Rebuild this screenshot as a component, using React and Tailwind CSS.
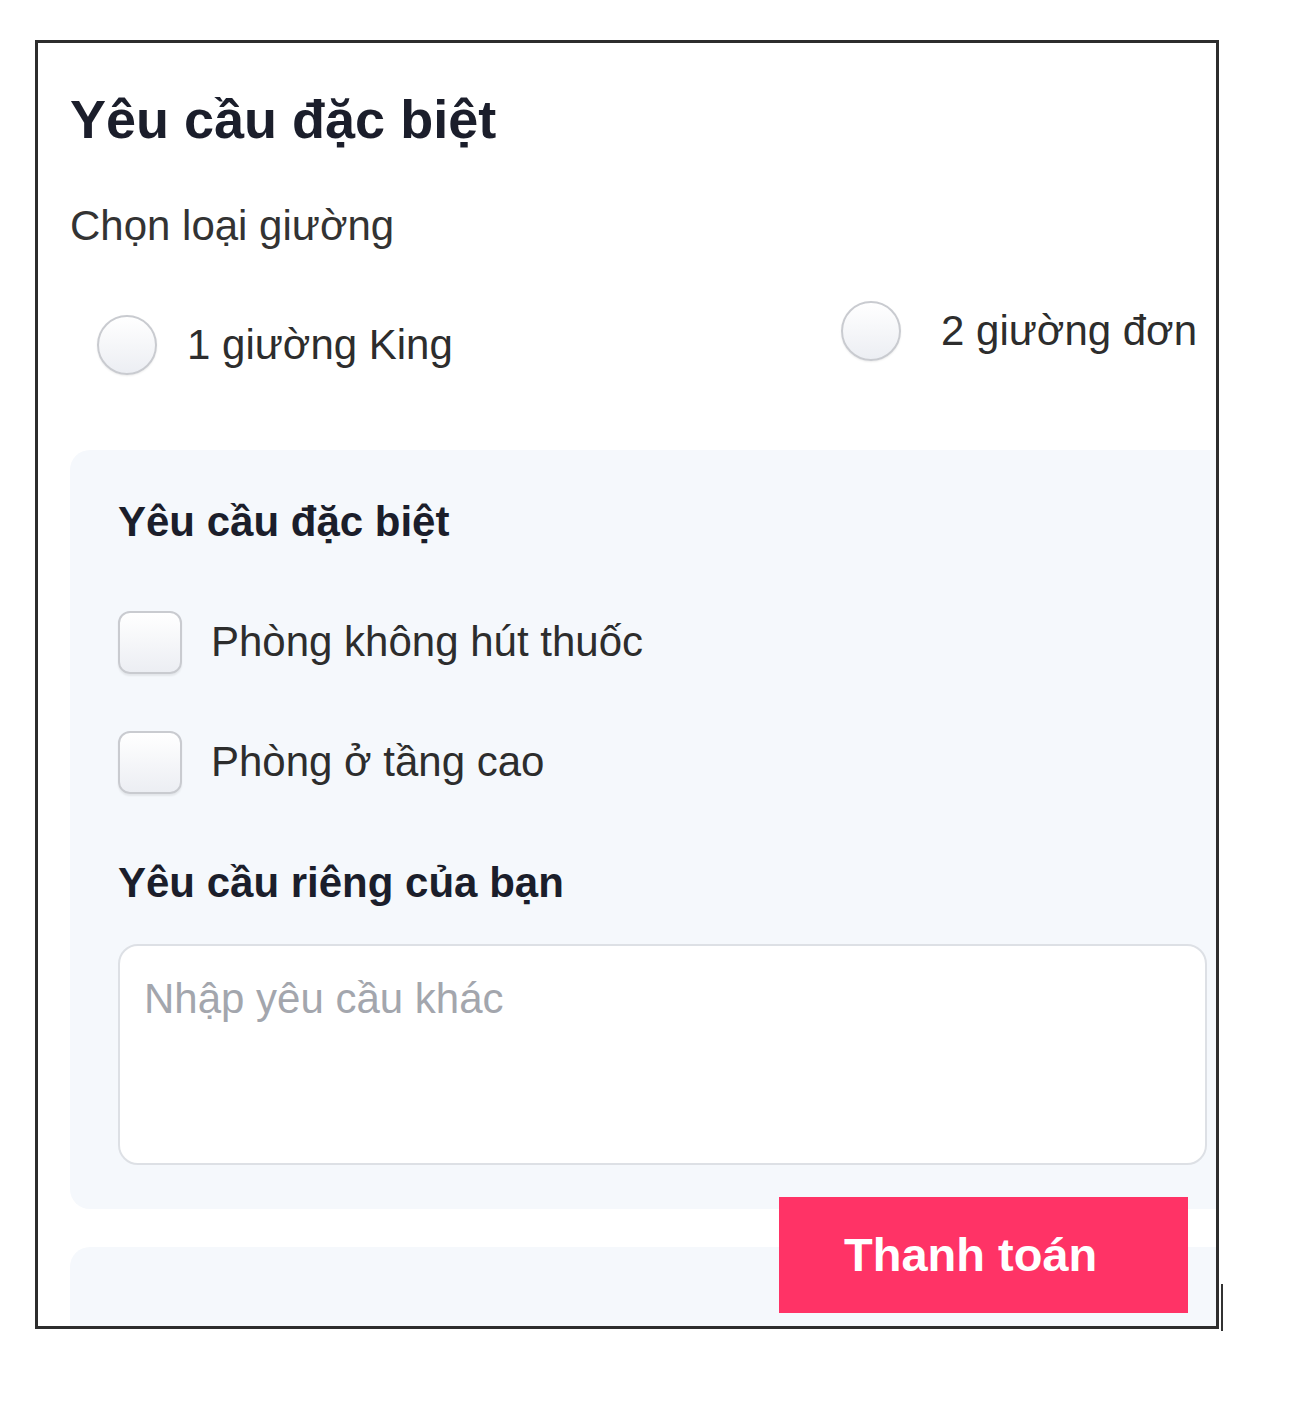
import { useState } from "react";

const font = { fontFamily: '"Liberation Sans", Arial, sans-serif' };

const bedOptions = [
  { id: "king", label: "1 giường King" },
  { id: "twin", label: "2 giường đơn" },
];

const extras = [
  { id: "nosmoke", label: "Phòng không hút thuốc" },
  { id: "high", label: "Phòng ở tầng cao" },
];

function Radio({ checked, onChange, name }) {
  return (
    <input
      type="radio"
      name={name}
      checked={checked}
      onChange={onChange}
      className="appearance-none shrink-0 w-[60px] h-[60px] rounded-full border-2 border-[#c9cbd0] bg-linear-to-b from-white to-[#eceef3] shadow-[0_1px_2px_rgba(0,0,0,0.08)] checked:border-[#ff3366]"
    />
  );
}

function Checkbox({ checked, onChange }) {
  return (
    <input
      type="checkbox"
      checked={checked}
      onChange={onChange}
      className="appearance-none shrink-0 w-[64px] h-[63px] rounded-[12px] border-2 border-[#c9cbd0] bg-linear-to-b from-white to-[#eceef3] shadow-[0_2px_2px_rgba(0,0,0,0.07)] checked:bg-[#ff3366]"
    />
  );
}

export default function App() {
  const [bed, setBed] = useState(null);
  const [picked, setPicked] = useState({});
  const [note, setNote] = useState("");

  return (
    <div className="min-h-screen bg-white pt-[40px] pl-[35px]" style={font}>
      <div className="flex items-end">
        <div className="relative w-[1184px] h-[1289px] border-[3px] border-[#2d2d2d] bg-white overflow-hidden pl-[32px] pt-[44px]">
          <h2 className="text-[54px] leading-[1.2] font-bold text-[#1b1e2b]">Yêu cầu đặc biệt</h2>
          <p className="mt-[49px] text-[42px] leading-[1.2] text-[#333]">Chọn loại giường</p>

          <div className="flex items-start mt-[50px] ml-[27px]">
            <label className="flex items-center w-[744px] mt-[14px]">
              <Radio name="bed" checked={bed === "king"} onChange={() => setBed("king")} />
              <span className="ml-[30px] text-[42px] leading-[1.2] text-[#2d2d2d] whitespace-nowrap">
                {bedOptions[0].label}
              </span>
            </label>
            <label className="flex items-center">
              <Radio name="bed" checked={bed === "twin"} onChange={() => setBed("twin")} />
              <span className="ml-[40px] text-[42px] leading-[1.2] text-[#2d2d2d] whitespace-nowrap">
                {bedOptions[1].label}
              </span>
            </label>
          </div>

          <div className="mt-[75px] w-[1185px] shrink-0 rounded-[20px] bg-[#f5f8fc] pl-[48px] pr-[48px] pt-[47px] pb-[44px]">
            <h3 className="text-[42px] leading-[1.2] font-bold text-[#1b1e2b]">Yêu cầu đặc biệt</h3>
            <div className="mt-[63px] flex flex-col gap-[57px]">
              {extras.map((x) => (
                <label key={x.id} className="flex items-center">
                  <Checkbox
                    checked={!!picked[x.id]}
                    onChange={() => setPicked((p) => ({ ...p, [x.id]: !p[x.id] }))}
                  />
                  <span className="ml-[29px] text-[42px] leading-[1.2] text-[#2d2d2d] whitespace-nowrap">{x.label}</span>
                </label>
              ))}
            </div>
            <h3 className="mt-[64px] text-[42px] leading-[1.2] font-bold text-[#1b1e2b]">Yêu cầu riêng của bạn</h3>
            <textarea
              value={note}
              onChange={(e) => setNote(e.target.value)}
              placeholder="Nhập yêu cầu khác"
              className="mt-[36px] block w-[1089px] h-[221px] resize-none rounded-[20px] border-2 border-[#dde0e5] bg-white pl-[24px] pt-[28px] text-[42px] leading-[1.2] text-[#333] placeholder:text-[#a3a6ad] outline-none"
              style={font}
            />
          </div>

          <div className="mt-[38px] w-[1185px] h-[200px] rounded-[20px] bg-[#f5f8fc]" />

          <button className="absolute right-[28px] bottom-[13px] w-[409px] h-[116px] bg-[#ff3366] flex items-center pl-[65px] text-white text-[47px] font-bold">
            Thanh toán
          </button>
        </div>
        <div className="w-[2px] h-[47px] ml-[2px] mb-[-2px] bg-[#333]" />
      </div>
    </div>
  );
}
